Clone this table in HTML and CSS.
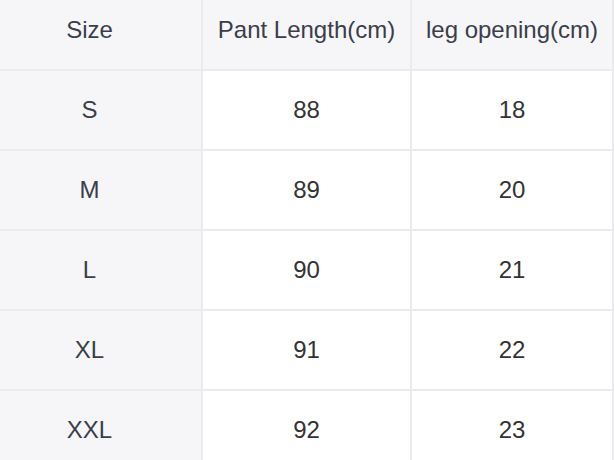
FILE: index.html
```html
<!DOCTYPE html>
<html>
<head>
<meta charset="utf-8">
<link rel="stylesheet" href="styles.css">
</head>
<body>
<div class="table">
  <div class="cell head">Size</div>
  <div class="cell head">Pant Length(cm)</div>
  <div class="cell head">leg opening(cm)</div>

  <div class="cell label">S</div>
  <div class="cell">88</div>
  <div class="cell">18</div>

  <div class="cell label">M</div>
  <div class="cell">89</div>
  <div class="cell">20</div>

  <div class="cell label">L</div>
  <div class="cell">90</div>
  <div class="cell">21</div>

  <div class="cell label">XL</div>
  <div class="cell">91</div>
  <div class="cell">22</div>

  <div class="cell label">XXL</div>
  <div class="cell">92</div>
  <div class="cell">23</div>
</div>
</body>
</html>
```

FILE: styles.css
```css
html, body {
  margin: 0;
  padding: 0;
  background: #ffffff;
  overflow: hidden;
}

.table {
  display: grid;
  grid-template-columns: 225px 209px 202px;
  grid-auto-rows: 80px;
  margin-top: -9px;
  margin-left: -22px;
  width: 636px;
  font-family: "Liberation Sans", Arial, sans-serif;
  font-size: 24px;
}

.cell {
  box-sizing: border-box;
  display: flex;
  align-items: center;
  justify-content: center;
  border-right: 2px solid #ebebee;
  border-bottom: 2px solid #ebebee;
  color: #333333;
  background: #ffffff;
}

.head,
.label {
  background: #f6f6f8;
  color: #3a3e4a;
}
```
